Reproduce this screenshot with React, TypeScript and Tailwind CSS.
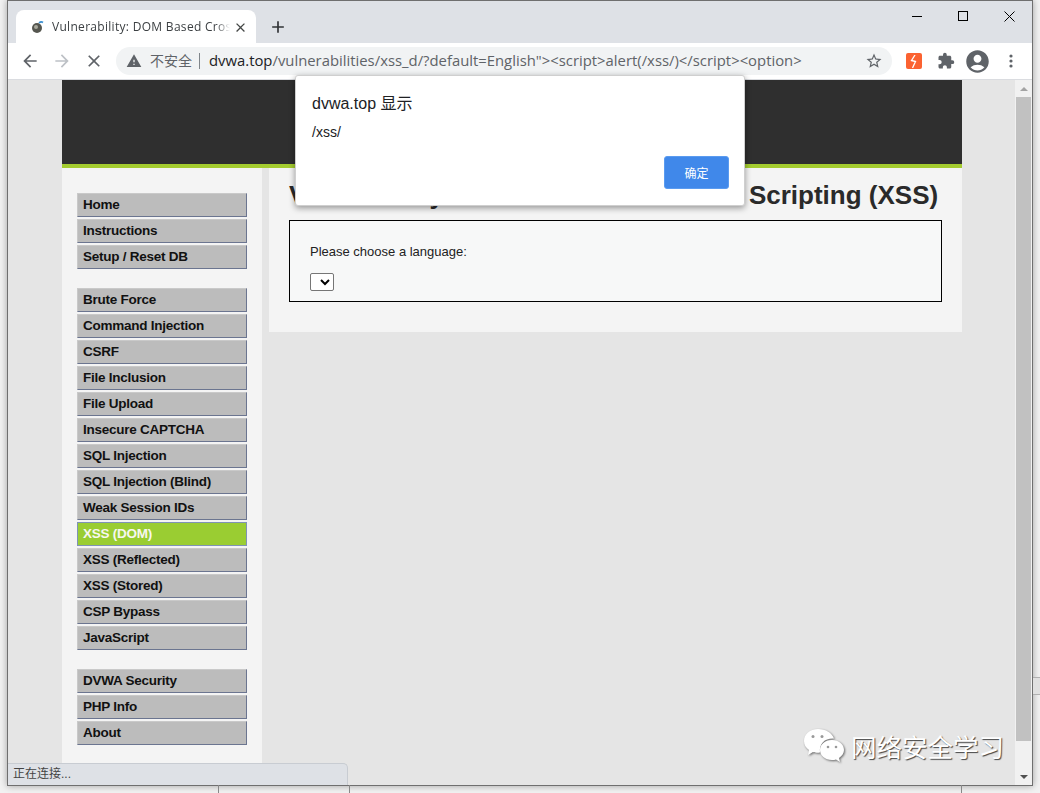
import React from "react";
import { MdExtension, MdAccountCircle, MdArrowBack, MdArrowForward, MdClose, MdStarBorder, MdAdd, MdWarning } from "react-icons/md";

const groups = [
  ["Home", "Instructions", "Setup / Reset DB"],
  ["Brute Force", "Command Injection", "CSRF", "File Inclusion", "File Upload", "Insecure CAPTCHA", "SQL Injection", "SQL Injection (Blind)", "Weak Session IDs", "XSS (DOM)", "XSS (Reflected)", "XSS (Stored)", "CSP Bypass", "JavaScript"],
  ["DVWA Security", "PHP Info", "About"],
];

const sans = "font-['Liberation_Sans','Noto_Sans_CJK_SC',sans-serif]";

function MenuItem({ label }: { label: string }) {
  const active = label === "XSS (DOM)";
  return (
    <div
      className={
        "h-[24px] w-[170px] border pl-[5px] text-[13.5px] tracking-[-0.25px] leading-[21px] font-bold " +
        (active
          ? "border-[#7f93b5] bg-[#9acd32] text-[#f7f7f0]"
          : "border-t-[#c9c9c9] border-l-[#c9c9c9] border-r-[#6b7590] border-b-[#6b7590] bg-[#bcbcbc] text-[#111111]")
      }
    >
      {label}
    </div>
  );
}

function Tab() {
  return (
    <div className="ml-[8px] mt-[9px] flex h-[34px] w-[240px] items-center rounded-t-[8px] bg-white pl-[14px] pr-[8px]">
      <svg width="16" height="16" viewBox="0 0 16 16" className="shrink-0">
        <circle cx="7" cy="9" r="5" fill="#55564f" />
        <circle cx="6" cy="8" r="2" fill="#a8a89c" />
        <path d="M9 4 Q11 2 13 3.5" stroke="#3b8fd0" strokeWidth="1.6" fill="none" />
      </svg>
      <span className="ml-[6px] w-[178px] whitespace-nowrap text-[12px] tracking-[0.3px] text-[#3c4043] [mask-image:linear-gradient(to_right,black_92%,transparent)] font-['Open_Sans',sans-serif]">
        Vulnerability: DOM Based Cros
      </span>
      <MdClose className="ml-[3px] shrink-0 text-[#444746]" size={15} />
    </div>
  );
}

function TitleBar() {
  return (
    <div className="flex h-[42px] shrink-0 items-start bg-[#dee1e6]">
      <Tab />
      <MdAdd className="ml-[12px] mt-[16px] text-[#303336]" size={20} />
      <div className="ml-auto flex items-start">
        <div className="flex h-[30px] w-[46px] items-center justify-center">
          <div className="h-[1px] w-[10px] bg-black" />
        </div>
        <div className="flex h-[30px] w-[46px] items-center justify-center">
          <div className="h-[10px] w-[10px] border border-black" />
        </div>
        <div className="flex h-[30px] w-[46px] items-center justify-center">
          <svg width="11" height="11" viewBox="0 0 11 11"><path d="M.5.5l10 10M10.5.5l-10 10" stroke="#000" strokeWidth="1" /></svg>
        </div>
      </div>
    </div>
  );
}

function Toolbar() {
  return (
    <div className="flex h-[37px] shrink-0 items-center border-b border-[#dadce0] bg-white">
      <MdArrowBack className="ml-[12px] text-[#5f6368]" size={20} />
      <MdArrowForward className="ml-[12px] text-[#bdc1c6]" size={20} />
      <MdClose className="ml-[12px] text-[#5f6368]" size={20} />
      <div className="ml-[12px] flex h-[28px] w-[776px] items-center rounded-full bg-[#f1f3f4] pl-[10px]">
        <MdWarning className="text-[#5f6368]" size={16} />
        <span className="ml-[8px] font-['Noto_Sans_CJK_SC',sans-serif] text-[14px] leading-[14px] -mt-[2px] text-[#5f6368]">不安全</span>
        <span className="ml-[7px] h-[16px] w-[1px] bg-[#80868b]" />
        <span className="ml-[9px] -mt-[1px] whitespace-nowrap font-['Open_Sans',sans-serif] text-[14.85px] text-[#5f6368]">
          <span className="text-[#202124]">dvwa.top</span>/vulnerabilities/xss_d/?default=English"&gt;&lt;script&gt;alert(/xss/)&lt;/script&gt;&lt;option&gt;
        </span>
        <MdStarBorder className="ml-auto mr-[9px] text-[#5f6368]" size={18} />
      </div>
      <div className="ml-[14px] flex h-[16px] w-[16px] items-center justify-center rounded-[2px] bg-[#fb6231]">
        <svg width="8" height="13" viewBox="0 0 8 13"><path d="M5 0L1.5 5.5L5.5 6.5L2.5 13" stroke="#fff" strokeWidth="1.3" fill="none" /></svg>
      </div>
      <MdExtension className="ml-[15px] text-[#5f6368]" size={18} />
      <MdAccountCircle className="ml-[9px] text-[#5f6368]" size={27} />
      <svg width="4" height="14" viewBox="0 0 4 14" className="ml-[18px]" fill="#5f6368">
        <circle cx="2" cy="2" r="1.6" /><circle cx="2" cy="7" r="1.6" /><circle cx="2" cy="12" r="1.6" />
      </svg>
    </div>
  );
}

function Sidebar() {
  return (
    <div className="flex w-[200px] shrink-0 flex-col gap-[19px] bg-[#f4f4f4] pb-[20px] pl-[15px] pt-[25px]">
      {groups.map((g, i) => (
        <div key={i} className="flex flex-col gap-[2px]">
          {g.map((l) => <MenuItem key={l} label={l} />)}
        </div>
      ))}
    </div>
  );
}

function Main() {
  return (
    <div className="ml-[7px] h-[164px] w-[693px] bg-[#f4f4f4] pl-[20px] pt-[11px]">
      <h1 className="whitespace-nowrap text-[26px] font-bold leading-[32px] text-[#2a2a2a]">
        Vulnerability: DOM Based Cross Site Scripting (XSS)
      </h1>
      <div className="mt-[9px] h-[82px] w-[653px] border border-black bg-[#f7f8f8] pl-[20px] pt-[22px]">
        <p className="text-[13px] leading-[18px] text-[#222222]">Please choose a language:</p>
        <select className="mt-[12px] block h-[18px] w-[24px] rounded-[2px] border border-[#767676] bg-white" />
      </div>
    </div>
  );
}

function Scrollbar() {
  return (
    <div className="flex w-[17px] shrink-0 flex-col items-center bg-[#f1f1f1]">
      <div className="flex h-[17px] w-full items-center justify-center">
        <div className="h-0 w-0 border-x-[4px] border-b-[4px] border-x-transparent border-b-[#a3a3a3]" />
      </div>
      <div className="h-[644px] w-[15px] bg-[#c1c1c1]" />
      <div className="mt-auto flex h-[17px] w-full items-center justify-center">
        <div className="h-0 w-0 border-x-[4px] border-t-[4px] border-x-transparent border-t-[#505050]" />
      </div>
    </div>
  );
}

function Page() {
  return (
    <div className="flex min-h-0 flex-1">
      <div className="min-w-0 flex-1 bg-[#e5e5e5] pl-[54px]">
        <div className="flex h-full w-[900px] flex-col overflow-hidden">
          <div className="h-[84px] shrink-0 bg-[#2f2f2f]" />
          <div className="h-[4px] shrink-0 bg-[#a4cc2f]" />
          <div className="flex">
            <Sidebar />
            <Main />
          </div>
        </div>
      </div>
      <Scrollbar />
    </div>
  );
}

function Alert() {
  return (
    <div className="absolute left-[295px] top-[75px] h-[131px] w-[450px] rounded-[3px] border border-[#cfcfcf] bg-white pl-[16px] pt-[18px] shadow-[0_2px_6px_rgba(0,0,0,0.4)]">
      <div className="text-[16px] leading-[20px] text-[#202124]">dvwa.top 显示</div>
      <div className="mt-[9px] text-[14px] leading-[18px] text-[#202124]">/xss/</div>
      <button className="absolute left-[368px] top-[80px] h-[33px] w-[65px] rounded-[3px] border border-[#5a9bf0] bg-[#4088ea] pt-[2px] text-[12px] text-white">确定</button>
    </div>
  );
}

function Watermark() {
  return (
    <div className="absolute left-[803px] top-[727px] flex items-center">
      <svg width="42" height="38" viewBox="0 0 42 38" className="drop-shadow-[1px_1px_1px_rgba(0,0,0,0.55)]">
        <path d="M15 2C7 2 1 7 1 14c0 4 2 7 5 9l-1 5 5-3c2 .6 3 .8 5 .8 1 0 1 0 2-.2C16 16 22 11 31 11.500 29 6 23 2 15 2z" fill="#fff" />
        <path d="M29 13c-7 0-12 4.500-12 10s5 10 12 10c1.500 0 3-.2 4-.6l4 2.600-1-4c3-2 5-4.800 5-8 0-5.500-5-10-12-10z" fill="#fff" />
        <circle cx="10" cy="9.500" r="1.500" fill="#999" /><circle cx="19" cy="9.500" r="1.500" fill="#999" />
        <circle cx="25" cy="20" r="1.300" fill="#999" /><circle cx="33" cy="20" r="1.300" fill="#999" />
      </svg>
      <span className="ml-[6px] font-['Noto_Sans_CJK_SC',sans-serif] text-[25.500px] leading-[30px] text-white [text-shadow:1px_1px_1px_#444]">网络安全学习</span>
    </div>
  );
}

export default function App() {
  return (
    <div className={"relative h-[793px] w-[1040px] overflow-hidden bg-[#f2f2f2] " + sans}>
      <div className="absolute bottom-0 left-[218px] h-[8px] w-[1px] bg-[#888888]" />
      <div className="absolute bottom-0 left-[349px] h-[8px] w-[1px] bg-[#888888]" />
      <div className="absolute bottom-0 left-[961px] h-[8px] w-[1px] bg-[#888888]" />
      <div className="absolute left-[1033px] top-[677px] h-[18px] w-[7px] border-y border-[#b0b0b0] bg-[#e0e0e0]" />
      <div className="ml-[7px] flex h-[786px] w-[1026px] flex-col border border-[#6f6f6f] shadow-[0_0_7px_rgba(0,0,0,0.35)]">
        <TitleBar />
        <Toolbar />
        <Page />
      </div>
      <Alert />
      <Watermark />
      <div className="absolute left-[8px] top-[763px] h-[22px] w-[340px] rounded-tr-[5px] border-r border-t border-[#c8ccd2] bg-[#dee1e6] pl-[5px] text-[12px] leading-[21px] text-[#444444]">正在连接...</div>
    </div>
  );
}
